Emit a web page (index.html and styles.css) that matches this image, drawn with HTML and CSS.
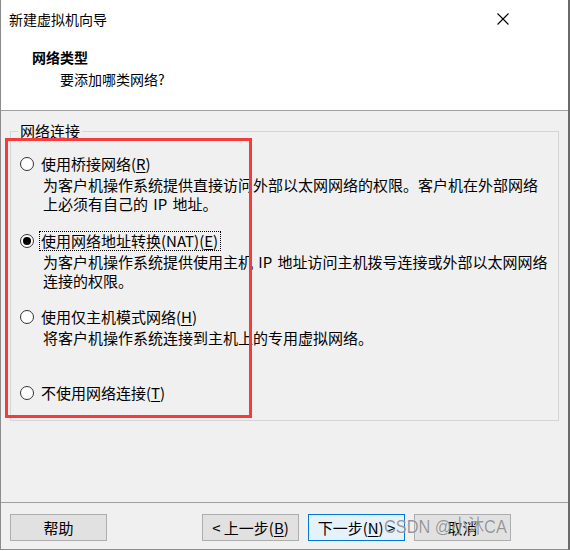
FILE: index.html
```html
<!DOCTYPE html>
<html lang="zh-CN">
<head>
<meta charset="utf-8">
<title>新建虚拟机向导</title>
<link rel="stylesheet" href="styles.css">
</head>
<body>
<div class="window">
  <div class="titlebar">
    <span class="title">新建虚拟机向导</span>
    <span class="close">
      <svg width="12" height="12" viewBox="0 0 12 12"><path d="M0.5 0.5 L11.5 11.5 M11.5 0.5 L0.5 11.5" stroke="#000" stroke-width="1.1" fill="none"/></svg>
    </span>
  </div>
  <div class="header">
    <div class="h-title">网络类型</div>
    <div class="h-sub">要添加哪类网络?</div>
  </div>
  <div class="content">
    <fieldset class="group">
      <legend class="legend">网络连接</legend>
      <div class="option first">
        <div class="opt-row"><span class="radio"></span><span class="label">使用桥接网络(<u>R</u>)</span></div>
        <div class="desc">为客户机操作系统提供直接访问外部以太网网络的权限。客户机在外部网络<br>上必须有自己的 IP 地址。</div>
      </div>
      <div class="option">
        <div class="opt-row"><span class="radio checked"></span><span class="label focus">使用网络地址转换(NAT)(<u>E</u>)</span></div>
        <div class="desc">为客户机操作系统提供使用主机 IP 地址访问主机拨号连接或外部以太网网络<br>连接的权限。</div>
      </div>
      <div class="option">
        <div class="opt-row"><span class="radio"></span><span class="label">使用仅主机模式网络(<u>H</u>)</span></div>
        <div class="desc">将客户机操作系统连接到主机上的专用虚拟网络。</div>
      </div>
      <div class="option last">
        <div class="opt-row"><span class="radio"></span><span class="label">不使用网络连接(<u>T</u>)</span></div>
      </div>
    </fieldset>
    <div class="annot"></div>
  </div>
  <div class="footer">
    <button class="btn">帮助</button>
    <button class="btn back">&lt; 上一步(<u>B</u>)</button>
    <button class="btn next">下一步(<u>N</u>) &gt;</button>
    <button class="btn">取消</button>
    <span class="watermark">CSDN @小沐CA</span>
  </div>
</div>
</body>
</html>
```

FILE: styles.css
```css
html, body {
  margin: 0;
  padding: 0;
  background: #ffffff;
}
body {
  font-family: "Noto Sans CJK SC", "Microsoft YaHei", sans-serif;
  font-size: 15px;
  color: #000;
}
.window {
  position: relative;
  box-sizing: border-box;
  width: 570px;
  height: 550px;
  border-left: 1px solid #8c8c8c;
  border-right: 2px solid #6a6a6a;
  border-bottom: 1px solid #8c8c8c;
  background: #f0f0f0;
  display: flex;
  flex-direction: column;
}
.titlebar {
  height: 38px;
  background: #fff;
  display: flex;
  align-items: center;
  justify-content: space-between;
  padding-left: 8px;
}
.title {
  font-size: 14px;
  line-height: 20px;
}
.close {
  width: 12px;
  height: 12px;
  margin-right: 59px;
  display: flex;
}
.header {
  box-sizing: border-box;
  height: 73px;
  background: #fff;
  border-bottom: 1px solid #a0a0a0;
  padding: 9px 0 0 31px;
}
.h-title {
  font-size: 14px;
  font-weight: bold;
  line-height: 20px;
}
.h-sub {
  font-size: 14px;
  line-height: 20px;
  margin-top: 2px;
  padding-left: 28px;
}
.content {
  position: relative;
  padding: 10px 0 0 9px;
}
.group {
  box-sizing: border-box;
  width: 549px;
  margin: 0;
  border: 1px solid #d5d5d5;
  padding: 13px 0 17px 0;
}
.legend {
  margin-left: 7px;
  padding: 0 2px;
  font-size: 15px;
  line-height: 20px;
}
.option {
  margin-bottom: 17px;
}
.option.first {
  margin-bottom: 18px;
}
.option.last {
  margin-bottom: 0;
}
.opt-row {
  height: 20px;
  display: flex;
  align-items: center;
  padding-left: 9px;
}
.radio {
  box-sizing: border-box;
  width: 14px;
  height: 14px;
  border: 1px solid #333;
  border-radius: 50%;
  background: #fff;
  display: flex;
  align-items: center;
  justify-content: center;
  margin-right: 5px;
}
.radio.checked::after {
  content: "";
  width: 8px;
  height: 8px;
  border-radius: 50%;
  background: #000;
}
.label {
  box-sizing: border-box;
  line-height: 18px;
  border: 1px dotted transparent;
  padding: 0 1px;
}
.label.focus {
  border-color: #000;
  padding-right: 2px;
}
.desc {
  margin-top: 1px;
  height: 38px;
  line-height: 19px;
  padding-left: 32px;
  white-space: nowrap;
  word-spacing: 2px;
}
u {
  text-decoration: underline;
  text-underline-offset: 2px;
}
.annot {
  position: absolute;
  left: 4px;
  top: 27px;
  width: 247px;
  height: 280px;
  box-sizing: border-box;
  border: 3px solid #f53c3c;
  pointer-events: none;
}
.footer {
  position: relative;
  margin-top: auto;
  height: 47px;
  box-sizing: border-box;
  border-top: 1px solid #a0a0a0;
  padding: 11px 0 0 9px;
  display: flex;
  align-items: flex-start;
}
.btn {
  box-sizing: border-box;
  width: 97px;
  height: 27px;
  background: #e1e1e1;
  border: 1px solid #adadad;
  font-family: "Noto Sans CJK SC", "Microsoft YaHei", sans-serif;
  font-size: 15px;
  line-height: 23px;
  padding: 0;
  color: #000;
  margin-right: 9px;
}
.btn.back {
  margin-left: 86px;
}
.btn.next {
  background: #e5f1fb;
  border-color: #0078d7;
}
.watermark {
  position: absolute;
  left: 383px;
  top: 11px;
  font-family: "Liberation Sans", Arial, "Noto Sans CJK SC", sans-serif;
  font-size: 19px;
  line-height: 26px;
  color: rgba(110, 110, 110, 0.72);
  text-shadow: 0 0 1px rgba(255,255,255,0.9);
  white-space: nowrap;
  pointer-events: none;
  transform: scaleX(0.86);
  transform-origin: left center;
}
```
